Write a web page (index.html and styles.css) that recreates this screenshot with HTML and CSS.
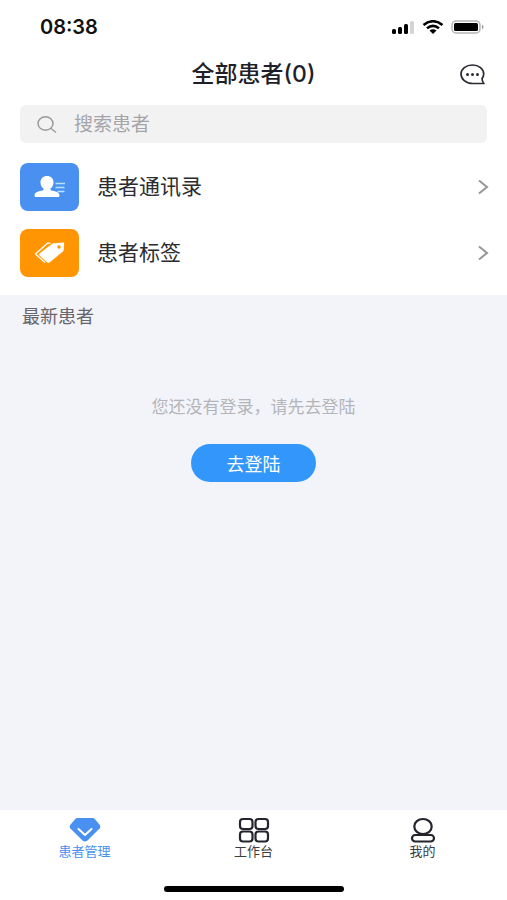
FILE: index.html
```html
<!DOCTYPE html>
<html lang="zh-CN">
<head>
    <meta charset="UTF-8">
    <meta name="viewport" content="width=device-width, initial-scale=1.0">
    <title>全部患者</title>
    <link rel="stylesheet" href="styles.css">
</head>
<body>
    <header class="top">
        <div class="status-bar">
            <span class="time">08:38</span>
            <div class="status-icons">
                <svg width="23" height="14" viewBox="0 0 23 14">
                    <rect x="0" y="9" width="4" height="5" rx="1.5"/>
                    <rect x="6" y="7" width="4" height="7" rx="1.5"/>
                    <rect x="12" y="4" width="4" height="10" rx="1.5"/>
                    <rect x="18" y="1" width="4" height="13" rx="1.5" fill="#d4d4d4"/>
                </svg>
                <svg width="22" height="14" viewBox="0 0 22 14">
                    <path d="M1.5 5Q11-2.5 20.500 5M5 8.200Q11 3.600 17 8.200" fill="none" stroke="#000" stroke-width="2.600"/>
                    <path d="M7.500 10.500Q11 8 14.500 10.500L11 14z"/>
                </svg>
                <svg width="34" height="14" viewBox="0 0 34 14">
                    <rect x="1" y="1" width="28" height="12" rx="4" fill="#fff" stroke="#b5b5b5" stroke-width="1.500"/>
                    <rect x="3" y="3" width="24" height="8" rx="1.500"/>
                    <path d="M31 4.500q3 2.500 0 5z" fill="#999"/>
                </svg>
            </div>
        </div>
        <div class="title-bar">
            <h1>全部患者(0)</h1>
            <button class="chat-btn" type="button" aria-label="消息">
                <svg width="25" height="21" viewBox="0 0 25 21">
                    <path d="M22 14.500C23.200 13.200 23.700 11.600 23.700 10 23.700 5 18.900 1 12.500 1S1 5 1 10s4.800 9.500 11.500 9.500H23.900C22.600 18 22 16.300 22 14.500z" fill="none" stroke="#2b2b33" stroke-width="1.700" stroke-linejoin="round"/>
                    <g fill="#2b2b33">
                        <circle cx="7.500" cy="10.500" r="1.500"/>
                        <circle cx="12.500" cy="10.500" r="1.500"/>
                        <circle cx="17.500" cy="10.500" r="1.500"/>
                    </g>
                </svg>
            </button>
        </div>
        <label class="search-box">
            <svg width="20" height="18" viewBox="0 0 20 18" fill="none" stroke="#9a9a9e" stroke-width="1.500" stroke-linecap="round">
                <ellipse cx="8.500" cy="8.500" rx="7.500" ry="6.700"/>
                <path d="M14 13.500l4.500 3.500"/>
            </svg>
            <input type="text" placeholder="搜索患者" aria-label="搜索患者">
        </label>
        <nav class="menu">
            <a class="menu-item" href="#">
                <span class="menu-icon blue">
                    <svg width="32" height="22" viewBox="0 0 32 22">
                        <path d="M13 0c4 0 6.500 2.600 6.500 6.500 0 2.800-1.200 4.800-3 6v1.500c1.500 1.200 9 1.200 9 5.200 0 1.400-.6 1.800-1.800 1.800H2.300C1 21 .5 20.500.5 19.200c0-4 7.500-4 9-5.200v-1.500c-1.800-1.200-3-3.200-3-6C6.500 2.600 9 0 13 0z" fill="#fff"/>
                        <path d="M21.500 7.500H31M21.500 11.500h9M23.500 15.500h7" stroke="#b9e2ff" stroke-width="1.500"/>
                    </svg>
                </span>
                <span class="menu-text">患者通讯录</span>
                <svg class="arrow" width="12" height="16" viewBox="0 0 12 16"><path d="M2 1.500L10 8l-8 6.500"/></svg>
            </a>
            <a class="menu-item" href="#">
                <span class="menu-icon orange">
                    <svg width="32" height="22" viewBox="0 0 32 22">
                        <path d="M16.500 1.200h-3L1.500 12l9.500 8.500" fill="none" stroke="#fff" stroke-width="1.300"/>
                        <path d="M18.500 1.500L29 .5q1.200 0 1.200 1.200L29.500 9 15.500 20.500q-1.200.8-2.300 0L5.500 13.500q-1-1 0-2z" fill="#fff"/>
                        <circle cx="25" cy="5" r="1.700" fill="#ff9502"/>
                    </svg>
                </span>
                <span class="menu-text">患者标签</span>
                <svg class="arrow" width="12" height="16" viewBox="0 0 12 16"><path d="M2 1.500L10 8l-8 6.500"/></svg>
            </a>
        </nav>
    </header>

    <main class="content">
        <h2>最新患者</h2>
        <div class="empty">
            <p>您还没有登录，请先去登陆</p>
            <button class="login-btn" type="button">去登陆</button>
        </div>
    </main>

    <footer class="bottom">
        <nav class="tabs">
            <a class="tab active" href="#">
                <svg width="32" height="26" viewBox="0 0 32 26">
                    <path d="M8.500 1h15q1.300 0 2.300.9l5 6q1.200 1.700 0 3.400L18.500 23.500q-2.500 2-5 0L1.200 11.300q-1.200-1.700 0-3.400l5-6Q7.200 1 8.500 1z" fill="#4990f1"/>
                    <path d="M9.500 12l6.500 6 6.500-6" fill="none" stroke="#fff" stroke-width="2" stroke-linecap="round" stroke-linejoin="round"/>
                </svg>
                患者管理
            </a>
            <a class="tab" href="#">
                <svg width="32" height="26" viewBox="0 0 32 26" fill="none" stroke="#24242c" stroke-width="2.200">
                    <rect x="2" y="2" width="12.500" height="10" rx="3"/>
                    <rect x="17.500" y="2" width="12.500" height="10" rx="3"/>
                    <rect x="2" y="14.500" width="12.500" height="10" rx="3"/>
                    <rect x="17.500" y="14.500" width="12.500" height="10" rx="3"/>
                </svg>
                工作台
            </a>
            <a class="tab" href="#">
                <svg width="32" height="26" viewBox="0 0 32 26" fill="none" stroke="#24242c" stroke-width="2.200">
                    <ellipse cx="16" cy="9.500" rx="8.700" ry="7.500"/>
                    <rect x="5" y="18" width="22" height="6.500" rx="3.200"/>
                </svg>
                我的
            </a>
        </nav>
        <div class="home-bar"></div>
    </footer>
</body>
</html>
```
FILE: styles.css
```css
* {
    margin: 0;
    padding: 0;
    box-sizing: border-box;
}
body {
    display: flex;
    flex-direction: column;
    min-height: 100vh;
    font-family: Inter, "Noto Sans CJK SC", sans-serif;
    background: #f2f4f9;
    color: #2b2b30;
}
a {
    color: inherit;
    text-decoration: none;
}
button {
    border: none;
    background: none;
    font-family: inherit;
    cursor: pointer;
}
svg {
    display: block;
    flex-shrink: 0;
}
.top {
    background: #fff;
    padding: 0 20px 18px;
}
.status-bar {
    display: flex;
    justify-content: space-between;
    align-items: center;
    height: 54px;
    padding-left: 20px;
}
.time {
    font-size: 20px;
    font-weight: 600;
    color: #111;
}
.status-icons {
    display: flex;
    align-items: center;
    gap: 7px;
    margin-right: 2px;
}
.title-bar {
    display: grid;
    grid-template-columns: 1fr auto 1fr;
    align-items: center;
    height: 40px;
}
.title-bar h1 {
    grid-column: 2;
    font-size: 23px;
    font-weight: 500;
    line-height: 32px;
    color: #1f1f29;
}
.chat-btn {
    justify-self: end;
    margin-right: 2px;
}
.search-box {
    display: flex;
    align-items: center;
    gap: 17px;
    height: 38px;
    margin-top: 11px;
    padding: 0 17px;
    background: #f2f2f3;
    border-radius: 6px;
}
.search-box input {
    flex: 1;
    min-width: 0;
    border: none;
    outline: none;
    background: none;
    font-family: inherit;
    font-size: 19px;
    color: #2b2b30;
}
.search-box input::placeholder {
    color: #a5a5a9;
}
.menu {
    display: flex;
    flex-direction: column;
    gap: 18px;
    margin-top: 20px;
}
.menu-item {
    display: flex;
    align-items: center;
    gap: 18px;
}
.menu-icon {
    display: flex;
    align-items: center;
    justify-content: center;
    width: 59px;
    height: 48px;
    border-radius: 8px;
}
.blue {
    background: #4990f1;
}
.orange {
    background: #ff9502;
}
.menu-text {
    flex: 1;
    font-size: 21px;
    line-height: 30px;
}
.arrow {
    margin-right: -2px;
    fill: none;
    stroke: #96969a;
    stroke-width: 2;
}
.content {
    flex: 1;
    padding: 9px 22px;
}
.content h2 {
    font-size: 18px;
    font-weight: 400;
    line-height: 26px;
    color: #66666b;
}
.empty {
    display: flex;
    flex-direction: column;
    align-items: center;
    gap: 24px;
    margin-top: 64px;
}
.empty p {
    font-size: 17px;
    line-height: 26px;
    color: #b4b5ba;
}
.login-btn {
    width: 125px;
    height: 38px;
    border-radius: 19px;
    background: #3396fb;
    color: #fff;
    font-size: 18px;
}
.bottom {
    background: #fff;
    padding: 7px 0 8px;
}
.tabs {
    display: flex;
}
.tab {
    flex: 1;
    display: flex;
    flex-direction: column;
    align-items: center;
    font-size: 13px;
    line-height: 16px;
    color: #3c3c42;
}
.tab.active {
    color: #4990f1;
}
.home-bar {
    width: 180px;
    height: 6px;
    margin: 27px auto 0;
    border-radius: 3px;
    background: #000;
}
```
